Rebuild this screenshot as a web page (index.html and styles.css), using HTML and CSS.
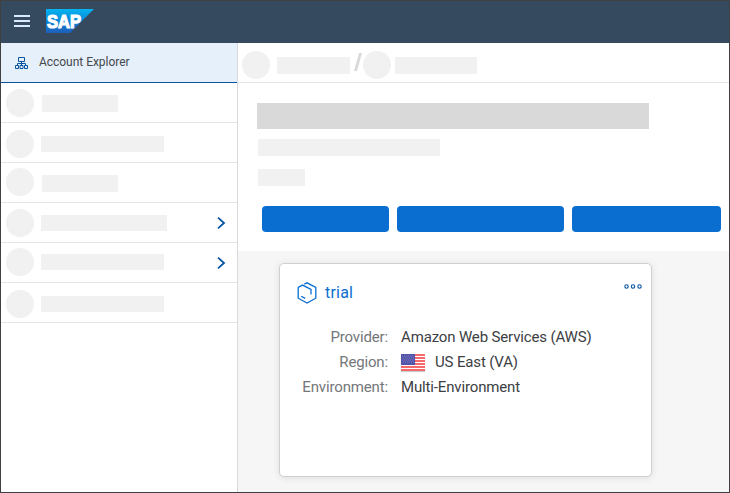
FILE: index.html
```html
<!DOCTYPE html>
<html lang="en">
<head>
<meta charset="utf-8">
<title>Account Explorer</title>
<link rel="stylesheet" href="styles.css">
</head>
<body>
<div class="app">
  <header class="shell">
    <svg class="burger" width="16" height="12" viewBox="0 0 16 12"><path d="M0 1h16M0 6h16M0 11h16" stroke="#d8eaff" stroke-width="2"/></svg>
    <svg class="logo" width="48" height="24" viewBox="0 0 48 24">
      <defs><linearGradient id="sap" x1="0" y1="0" x2="0" y2="1"><stop offset="0" stop-color="#06b4f0"/><stop offset=".5" stop-color="#0c86d8"/><stop offset="1" stop-color="#1e5fbb"/></linearGradient></defs>
      <path d="M0 0h48L24 24H0z" fill="url(#sap)"/>
      <text x="1" y="18.500" class="logo-text" textLength="34" lengthAdjust="spacingAndGlyphs">SAP</text>
    </svg>
  </header>
  <div class="body">
    <nav class="side">
      <div class="nav-active">
        <svg width="13" height="13" viewBox="0 0 13 13" fill="none" stroke="#0854a0"><path d="M3.500 .5h6v4h-6zM6.500 4.500v4M2.500 8.500v-2h8v2M.5 8.500h3v3h-3zM5 8.500h3v3H5zM9.500 8.500h3v3h-3z"/></svg>
        <span>Account Explorer</span>
      </div>
      <div class="row r1"><i class="dot"></i><i class="bar"></i></div>
      <div class="row r2"><i class="dot"></i><i class="bar"></i></div>
      <div class="row r3"><i class="dot"></i><i class="bar"></i></div>
      <div class="row r4"><i class="dot"></i><i class="bar"></i><svg class="chev" width="9" height="12" viewBox="0 0 9 12"><path d="M1 .7l6 5.300-6 5.300"/></svg></div>
      <div class="row r5"><i class="dot"></i><i class="bar"></i><svg class="chev" width="9" height="12" viewBox="0 0 9 12"><path d="M1 .7l6 5.300-6 5.300"/></svg></div>
      <div class="row r6"><i class="dot"></i><i class="bar"></i></div>
    </nav>
    <main class="main">
      <div class="crumbs">
        <i class="dot"></i><i class="bar c1"></i>
        <svg class="slash" width="9" height="18" viewBox="0 0 9 18"><path d="M0 18L5 0H8L3 18z" fill="#d9d9d9"/></svg>
        <i class="dot"></i><i class="bar c2"></i>
      </div>
      <section class="head">
        <div class="title-bar"></div>
        <div class="bar h1"></div>
        <div class="bar h2"></div>
        <div class="buttons"><button class="b1"></button><button class="b2"></button><button class="b3"></button></div>
      </section>
      <section class="content">
        <article class="card">
          <div class="card-head">
            <svg class="cube" width="20" height="22" viewBox="0 0 20 22" fill="none" stroke="#0a6ed1" stroke-width="1.300"><path d="M7.300 2.100L10 .8l8.800 4.600v10.800L10 21l-8.800-4.800V5.400L5.500 3.100 14 7.500v5M4.200 14.200l4 2.200"/></svg>
            <h2>trial</h2>
            <svg class="more" width="18" height="5" viewBox="0 0 18 5" fill="none" stroke="#0854a0" stroke-width="1.100"><circle cx="2.500" cy="2.500" r="1.700"/><circle cx="9" cy="2.500" r="1.700"/><circle cx="15.500" cy="2.500" r="1.700"/></svg>
          </div>
          <dl class="facts">
            <dt>Provider:</dt><dd>Amazon Web Services (AWS)</dd>
            <dt>Region:</dt>
            <dd class="region"><svg class="flag" width="24" height="17" viewBox="0 0 24 17"><path fill="#fff" d="M0 0h24v17H0z"/><path d="M0 1h24M0 4h24M0 7h24M0 10h24M0 13h24M0 16h24" stroke="#f0383c" stroke-width="1.700"/><path fill="#5455a8" d="M0 0h14v11H0z"/><path d="M1 2h12M2 4h12M1 6h12M2 8h12" stroke="#8687c4" stroke-width=".8" stroke-dasharray="1 1"/></svg><span>US East (VA)</span></dd>
            <dt>Environment:</dt><dd>Multi-Environment</dd>
          </dl>
        </article>
      </section>
    </main>
  </div>
</div>
</body>
</html>
```
FILE: styles.css
```css
* { box-sizing: border-box; }
body { margin: 0; font-family: Roboto, "Liberation Sans", sans-serif; }
svg { display: block; flex: none; }
.app { width: 730px; height: 493px; border: 1px solid #404040; background: #fff; display: flex; flex-direction: column; overflow: hidden; }
.shell { height: 42px; flex: none; background: #354a5f; display: flex; align-items: flex-start; }
.burger { margin: 14px 0 0 13px; }
.logo { margin: 8px 0 0 16px; }
.logo-text { font: bold 19px "Liberation Sans", sans-serif; fill: #fff; stroke: #fff; stroke-width: 1.2px; }
.body { flex: 1; display: flex; min-height: 0; }
.side { width: 237px; flex: none; border-right: 1px solid #d9d9d9; }
.nav-active { height: 40px; background: #e5f0fa; border-bottom: 1px solid #0854a0; display: flex; align-items: center; padding-left: 14px; gap: 11px; font-size: 12px; letter-spacing: -.03px; color: #45484c; }
.nav-active svg { margin-top: 2px; }
.nav-active span { margin-top: -1px; }
.row { height: 40px; border-bottom: 1px solid #e5e5e5; display: flex; align-items: flex-start; padding-left: 5px; }
.dot { width: 28px; height: 28px; border-radius: 50%; background: #f1f1f1; flex: none; }
.bar { background: #f1f1f1; height: 16px; width: 123px; margin-left: 7px; flex: none; }
.r1 .dot, .r4 .dot { margin-top: 6px; }
.r2 .dot, .r6 .dot { margin-top: 7px; }
.r3 .dot, .r5 .dot { margin-top: 5px; }
.r1 .bar, .r3 .bar { margin: 12px 0 0 8px; width: 76px; height: 17px; }
.r2 .bar, .r6 .bar { margin-top: 13px; }
.r4 .bar { margin-top: 12px; width: 126px; }
.r5 .bar { margin-top: 11px; }
.chev { margin: 14px 11px 0 auto; fill: none; stroke: #0854a0; stroke-width: 1.8; }
.main { flex: 1; display: flex; flex-direction: column; min-width: 0; }
.crumbs { height: 40px; border-bottom: 1px solid #e5e5e5; display: flex; align-items: flex-start; padding: 8px 0 0 4px; }
.crumbs .bar { height: 17px; margin-top: 6px; }
.crumbs .c1 { width: 73px; }
.crumbs .c2 { width: 82px; margin-left: 4px; }
.slash { margin: 2px 0 0 4px; }
.head { height: 168px; padding: 20px 0 0 19px; }
.title-bar { width: 392px; height: 26px; background: #d9d9d9; }
.head .bar { height: 17px; margin-left: 1px; }
.head .h1 { width: 182px; margin-top: 10px; }
.head .h2 { width: 47px; margin-top: 13px; }
.buttons { display: flex; gap: 8px; margin: 20px 0 0 5px; }
.buttons button { height: 26px; padding: 0; border: 0; border-radius: 4px; background: #0a6ed1; }
.b1 { width: 127px; }
.b2 { width: 167px; }
.b3 { width: 149px; }
.content { flex: 1; background: #f6f6f6; padding: 12px 0 0 41px; }
.card { width: 373px; height: 214px; background: #fff; border: 1px solid #cfd0d0; border-radius: 5px; box-shadow: 0 1px 7px rgba(0,0,0,.1); padding: 18px 9px 0 17px; }
.card-head { display: flex; align-items: flex-start; height: 43px; }
.card-head h2 { margin: 0 0 0 8px; font-size: 16px; line-height: 22px; font-weight: 400; letter-spacing: .2px; color: #0a6ed1; }
.more { margin: 2px 0 0 auto; }
.facts { margin: 0; display: grid; grid-template-columns: 91px 1fr; column-gap: 13px; grid-auto-rows: 25px; font-size: 15px; line-height: 25px; letter-spacing: -.15px; color: #3c4044; }
.facts dt { text-align: right; color: #74777a; white-space: nowrap; }
.facts dd { margin: 0; white-space: nowrap; }
.region { display: flex; align-items: center; gap: 10px; }
.flag { box-shadow: 0 1px 1px rgba(0,0,0,.2); }
```
